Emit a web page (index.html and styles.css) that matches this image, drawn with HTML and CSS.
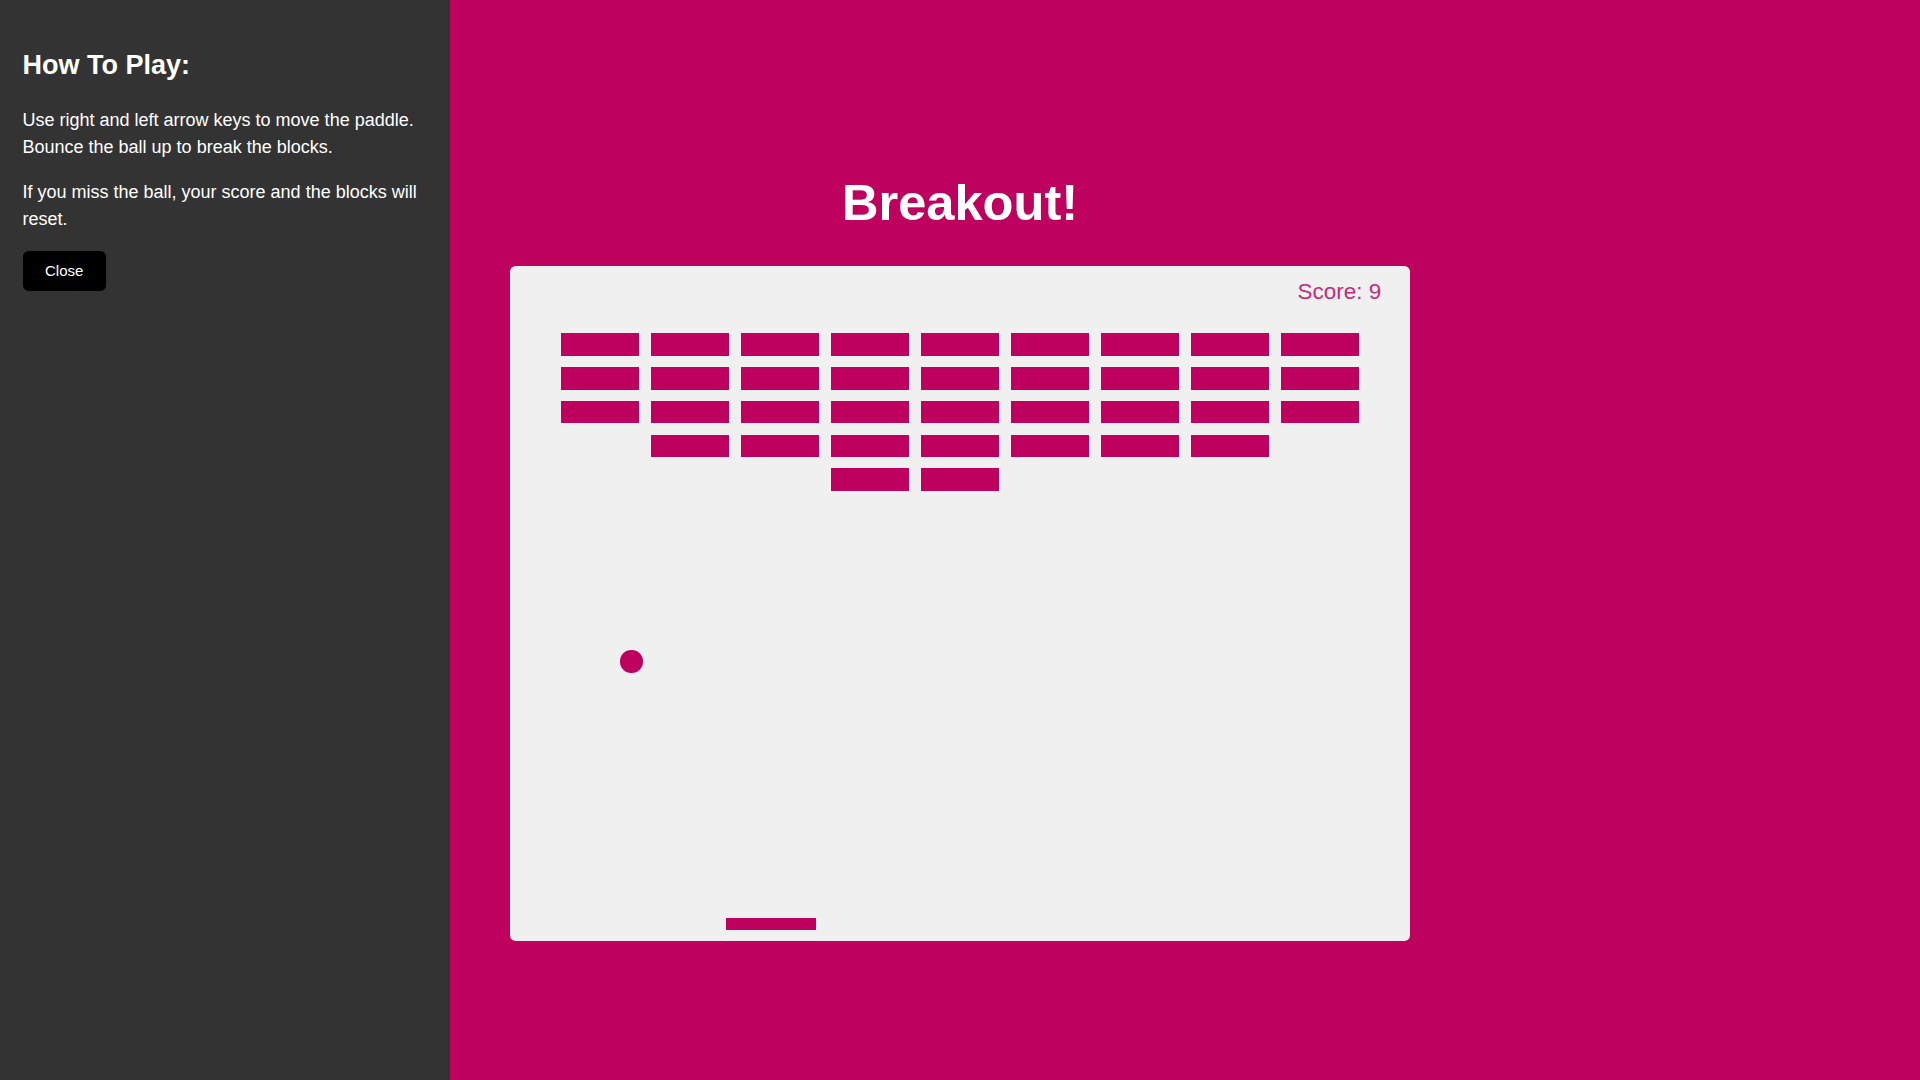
FILE: index.html
```html
<!DOCTYPE html>
<html lang="en">
<head>
<meta charset="UTF-8">
<title>Breakout!</title>
<link rel="stylesheet" href="styles.css">
</head>
<body>
  <div class="rules">
    <h2>How To Play:</h2>
    <p>Use right and left arrow keys to move the paddle. Bounce the ball up to break the blocks.</p>
    <p>If you miss the ball, your score and the blocks will reset.</p>
    <button class="btn">Close</button>
  </div>

  <h1>Breakout!</h1>
  <div class="board">
    <div class="score">Score: 9</div>
    <div class="bricks">
      <span class="brick"></span><span class="brick"></span><span class="brick"></span><span class="brick"></span><span class="brick"></span><span class="brick"></span><span class="brick"></span><span class="brick"></span><span class="brick"></span>
      <span class="brick"></span><span class="brick"></span><span class="brick"></span><span class="brick"></span><span class="brick"></span><span class="brick"></span><span class="brick"></span><span class="brick"></span><span class="brick"></span>
      <span class="brick"></span><span class="brick"></span><span class="brick"></span><span class="brick"></span><span class="brick"></span><span class="brick"></span><span class="brick"></span><span class="brick"></span><span class="brick"></span>
      <span class="brick gone"></span><span class="brick"></span><span class="brick"></span><span class="brick"></span><span class="brick"></span><span class="brick"></span><span class="brick"></span><span class="brick"></span><span class="brick gone"></span>
      <span class="brick gone"></span><span class="brick gone"></span><span class="brick gone"></span><span class="brick"></span><span class="brick"></span><span class="brick gone"></span><span class="brick gone"></span><span class="brick gone"></span><span class="brick gone"></span>
    </div>
    <div class="ball"></div>
    <div class="paddle"></div>
  </div>
</body>
</html>
```

FILE: styles.css
```css
* {
  box-sizing: border-box;
}

body {
  margin: 0;
  min-height: 100vh;
  background-color: #be005e;
  display: flex;
  flex-direction: column;
  align-items: center;
  justify-content: center;
  font-family: "Liberation Sans", Arial, sans-serif;
}

h1 {
  font-size: 50.625px;
  font-weight: bold;
  color: #fff;
  margin: 33.9px 0;
}

.board {
  position: relative;
  width: 900px;
  height: 675px;
  background: #f0f0f0;
  border-radius: 5.6px;
  padding: 67.5px 0 0 50.625px;
}

.bricks {
  display: grid;
  grid-template-columns: repeat(9, 78.75px);
  grid-auto-rows: 22.5px;
  gap: 11.25px;
}

.brick {
  display: block;
  background: #be005e;
}

.brick.gone {
  visibility: hidden;
}

.score {
  position: absolute;
  left: 787.5px;
  top: 14.7px;
  font-size: 22.5px;
  line-height: 22.5px;
  color: #c42c76;
}

.ball {
  position: absolute;
  left: 110.4px;
  top: 384.4px;
  width: 22.5px;
  height: 22.5px;
  border-radius: 50%;
  background: #be005e;
}

.paddle {
  position: absolute;
  left: 216px;
  top: 652.5px;
  width: 90px;
  height: 11.25px;
  background: #be005e;
}

.rules {
  position: absolute;
  top: 0;
  left: 0;
  width: 450px;
  min-height: 100vh;
  background: #333;
  color: #fff;
  padding: 22.5px;
  line-height: 1.5;
  font-size: 18px;
}

.rules h2 {
  font-size: 27px;
  margin: 22.4px 0 21.2px;
}

.rules p {
  margin: 18px 0;
}

.btn {
  border: 0;
  padding: 11.25px 22.5px;
  background: #000;
  color: #fff;
  border-radius: 5.6px;
  font-family: inherit;
  font-size: 15px;
  line-height: 18px;
}
```
